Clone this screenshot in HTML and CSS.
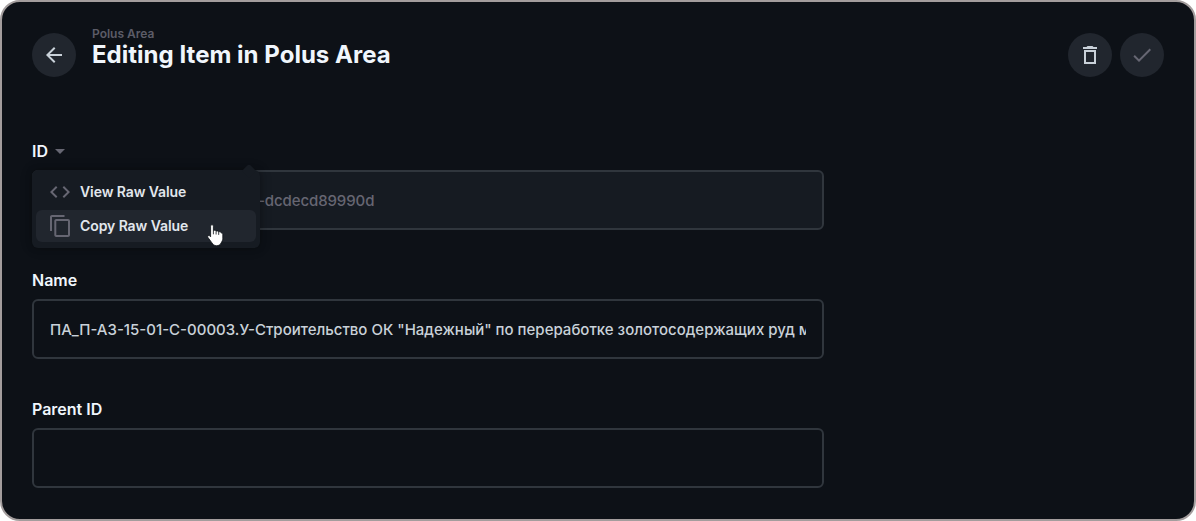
FILE: index.html
```html
<!DOCTYPE html>
<html lang="en">
<head>
<meta charset="utf-8">
<title>Editing Item in Polus Area</title>
<link rel="stylesheet" href="styles.css">
</head>
<body>
<main class="window">
  <header class="header">
    <button class="round back" aria-label="Back"><svg viewBox="0 0 24 24"><path d="M20 11H7.83l5.59-5.59L12 4l-8 8 8 8 1.41-1.41L7.83 13H20v-2z"/></svg></button>
    <div class="titles">
      <div class="crumb">Polus Area</div>
      <h1 class="title">Editing Item in Polus Area</h1>
    </div>
    <div class="actions">
      <button class="round" aria-label="Delete"><svg viewBox="0 0 24 24"><path d="M6 21h12V7H6v14zM8 9h8v10H8V9zm7.500-5-1-1h-5l-1 1H5v2h14V4z"/></svg></button>
      <button class="round disabled" aria-label="Save"><svg viewBox="0 0 24 24"><path d="M9 16.170 4.830 12l-1.420 1.410L9 19 21 7l-1.410-1.410z"/></svg></button>
    </div>
  </header>
  <form class="form">
    <div class="field">
      <div class="label">ID<span class="caret"></span></div>
      <div class="input readonly"><span class="value tail">-dcdecd89990d</span></div>
      <div class="menu">
        <div class="item"><svg viewBox="0 0 24 24"><path d="M9.400 16.600 4.800 12l4.600-4.600L8 6l-6 6 6 6 1.400-1.400zm5.200 0 4.600-4.600-4.600-4.600L16 6l6 6-6 6-1.400-1.400z"/></svg><span>View Raw Value</span></div>
        <div class="item active"><svg viewBox="0 0 24 24"><path d="M16.500 1H4c-1.100 0-2 .9-2 2v14h2V3h12.500V1zM20 5H8.300c-1.100 0-2 .9-2 2v14c0 1.100.9 2 2 2H20c1.100 0 2-.9 2-2V7c0-1.100-.9-2-2-2zm0 16H8.300V7H20v14z"/></svg><span>Copy Raw Value</span></div>
        <svg class="cursor" viewBox="0 0 17 22"><path d="M5 .8c.9 0 1.400.7 1.400 1.500v4.500c.4-.7 2.300-.7 2.700.4.700-.6 2.200-.3 2.600.7 1-.5 2.500 0 2.700 1.200.9 0 1.400.7 1.400 1.700v3.500c0 2-.8 3-1.700 4.700-1 2-2.500 2.700-4.500 2.700-2.300 0-3.500-1-4.800-3L1 13.500c-.9-1.600.6-2.700 1.700-1.700L3.600 12.800V2.300C3.600 1.400 4.200.8 5 .8z"/><path class="knuckles" d="M6.400 6.800v3.500M9.100 7.200v3.300M11.700 7.900v3"/></svg>
      </div>
    </div>
    <div class="field">
      <div class="label">Name</div>
      <div class="input"><span class="value">ПА_П-АЗ-15-01-С-00003.У-Строительство ОК "Надежный" по переработке золотосодержащих руд месторождения</span></div>
    </div>
    <div class="field">
      <div class="label">Parent ID</div>
      <div class="input"></div>
    </div>
  </form>
</main>
</body>
</html>
```
FILE: styles.css
```css
* { box-sizing: border-box; }
body { margin: 0; background: #fff; font-family: Inter, "Liberation Sans", sans-serif; }
.window { height: 521px; padding: 31px 30px 0; overflow: hidden; background: #0d1117; border: 2px solid #a39d9d; border-radius: 20px; }
svg { display: block; flex: none; width: 24px; height: 24px; fill: currentColor; }
.header { display: flex; height: 44px; }
.round { display: flex; align-items: center; justify-content: center; width: 44px; height: 44px; padding: 0; border: 0; border-radius: 50%; background: #21262e; color: #c9d1d9; }
.disabled { color: #666672; }
.titles { margin: -7px 0 0 16px; }
.crumb { font-size: 12px; line-height: 16px; font-weight: 600; color: #5c5c67; }
.title { margin: 0; font-size: 24px; line-height: 26px; font-weight: 700; letter-spacing: .02px; color: #f0f6fc; }
.actions { display: flex; gap: 8px; margin-left: auto; }
.form { display: grid; grid-template-columns: minmax(0, 1fr); gap: 39px; width: 792px; margin-top: 63px; }
.field { position: relative; }
.label { display: flex; align-items: center; height: 22px; margin-bottom: 8px; font-size: 16px; font-weight: 600; color: #f0f6fc; }
.caret { width: 10px; margin-left: 7px; border: 5px solid transparent; border-top-color: #666672; border-bottom: 0; }
.input { display: flex; align-items: center; height: 60px; padding: 0 16px; border: 2px solid #30363d; border-radius: 6px; font-size: 15px; font-weight: 500; color: #c9d1d9; }
.value { flex: 1; min-width: 0; overflow: hidden; white-space: nowrap; }
.readonly { background: #161b22; color: #666672; }
.tail { padding-left: 208px; letter-spacing: -.1px; }
.menu { position: absolute; top: 30px; left: 0; width: 228px; height: 78px; padding: 6px 4px; background: #161b22; border-radius: 6px; box-shadow: 0 0 6px rgba(0, 0, 0, .3), 0 0 12px 2px rgba(0, 0, 0, .1); }
.menu::before { content: ""; position: absolute; top: -4px; left: 212px; width: 10px; height: 10px; background: #161b22; border-radius: 2px; transform: rotate(45deg); }
.item { display: flex; align-items: center; gap: 8px; height: 32px; margin-bottom: 2px; padding: 0 12px; border-radius: 6px; color: #666672; }
.item span { padding-bottom: 2px; font-size: 14px; font-weight: 600; letter-spacing: -.09px; color: #e2e7ed; }
.active { background: #21262e; }
.cursor { position: absolute; left: 175px; top: 54px; width: 17px; height: 22px; fill: #fff; stroke: #0d1117; stroke-width: .8; }
.knuckles { fill: none; }
```
